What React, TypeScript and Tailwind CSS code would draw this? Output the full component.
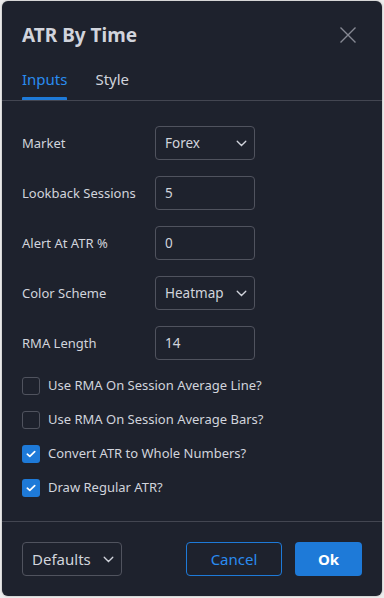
import React, { useState } from 'react';

const font = { fontFamily: '"Noto Sans", "Open Sans", Arial, sans-serif' };

function Chevron() {
  return (
    <svg width="11" height="7" viewBox="0 0 11 7" fill="none" className="shrink-0">
      <path d="M1.2 1.2L5.5 5.5L9.8 1.2" stroke="#d1d4dc" strokeWidth="1.3" strokeLinecap="round" />
    </svg>
  );
}

function SelectBox({ value }: { value: string }) {
  return (
    <div className="flex h-[34px] w-[100px] items-center justify-between rounded-[4px] border border-[#50535e] pl-[9px] pr-[7px] pt-[1px] text-[13.5px] text-[#d1d4dc]">
      <span>{value}</span>
      <Chevron />
    </div>
  );
}

function InputBox({ value }: { value: string }) {
  return (
    <div className="flex h-[34px] w-[100px] items-center rounded-[4px] border border-[#50535e] px-[9px] pt-[1px] text-[13.5px] text-[#d1d4dc]">
      {value}
    </div>
  );
}

function Check({ label, checked }: { label: string; checked: boolean }) {
  return (
    <div className="flex h-[34px] items-center gap-[8px]">
      {checked ? (
        <div className="flex h-[18px] w-[18px] items-center justify-center rounded-[3px] bg-[#1e7ad8]">
          <svg width="10" height="8" viewBox="0 0 10 8" fill="none">
            <path d="M1.3 4.2L3.8 6.4L8.7 1.6" stroke="#ffffff" strokeWidth="1.7" strokeLinecap="round" strokeLinejoin="round" />
          </svg>
        </div>
      ) : (
        <div className="h-[18px] w-[18px] rounded-[3px] border border-[#50535e]" />
      )}
      <span className="text-[13px] text-[#d1d4dc]">{label}</span>
    </div>
  );
}

export default function App() {
  const [tab, setTab] = useState('inputs');

  const fields: { label: string; kind: 'select' | 'input'; value: string }[] = [
    { label: 'Market', kind: 'select', value: 'Forex' },
    { label: 'Lookback Sessions', kind: 'input', value: '5' },
    { label: 'Alert At ATR %', kind: 'input', value: '0' },
    { label: 'Color Scheme', kind: 'select', value: 'Heatmap' },
    { label: 'RMA Length', kind: 'input', value: '14' },
  ];

  return (
    <div className="h-[598px] w-[384px] bg-[#ececec] pl-[2px] pt-[1px]" style={font}>
      <div className="flex h-[595px] w-[380px] flex-col rounded-[6px] bg-[#1e222d] shadow-[0_0_2px_rgba(0,0,0,0.35)]">
        {/* header */}
        <div className="border-b border-[#434651] px-[20px]">
          <div className="mt-[20px] flex h-[28px] items-center justify-between">
            <span className="text-[19px] font-bold text-[#d1d4dc]">ATR By Time</span>
            <svg width="18" height="18" viewBox="0 0 18 18" fill="none" className="mr-[5px]">
              <path d="M1.5 1.5L16.5 16.5M16.5 1.5L1.5 16.5" stroke="#868993" strokeWidth="1.4" />
            </svg>
          </div>
          <div className="mt-[14px] flex gap-[28px]">
            <button
              onClick={() => setTab('inputs')}
              className={`flex h-[37px] flex-col justify-between pt-[5px] text-[15px] ${tab === 'inputs' ? 'text-[#2a8cf0]' : 'text-[#d1d4dc]'}`}
            >
              <span>Inputs</span>
              <span className={`h-[3px] w-full rounded-t-[1px] ${tab === 'inputs' ? 'bg-[#1e7ad8]' : 'bg-transparent'}`} />
            </button>
            <button
              onClick={() => setTab('style')}
              className={`flex h-[37px] flex-col justify-between pt-[5px] text-[15px] ${tab === 'style' ? 'text-[#2a8cf0]' : 'text-[#d1d4dc]'}`}
            >
              <span>Style</span>
              <span className={`h-[3px] w-full ${tab === 'style' ? 'bg-[#1e7ad8]' : 'bg-transparent'}`} />
            </button>
          </div>
        </div>

        {/* body */}
        <div className="flex flex-1 flex-col px-[20px] pt-[25px]">
          <div className="flex flex-col gap-[16px]">
            {fields.map((f) => (
              <div key={f.label} className="flex items-center">
                <span className="w-[133px] pt-[2px] text-[13px] text-[#d1d4dc]">{f.label}</span>
                {f.kind === 'select' ? <SelectBox value={f.value} /> : <InputBox value={f.value} />}
              </div>
            ))}
          </div>
          <div className="mt-[9px] flex flex-col">
            <Check label="Use RMA On Session Average Line?" checked={false} />
            <Check label="Use RMA On Session Average Bars?" checked={false} />
            <Check label="Convert ATR to Whole Numbers?" checked={true} />
            <Check label="Draw Regular ATR?" checked={true} />
          </div>
        </div>

        {/* footer */}
        <div className="flex h-[75px] items-start justify-between border-t border-[#434651] px-[20px] pt-[20px]">
          <div className="flex h-[34px] w-[100px] items-center justify-between rounded-[4px] border border-[#50535e] pl-[9px] pr-[7px] text-[15px] text-[#d1d4dc]">
            <span>Defaults</span>
            <Chevron />
          </div>
          <div className="flex gap-[13px]">
            <button className="flex h-[34px] w-[96px] items-center justify-center rounded-[4px] border border-[#1e7ad8] text-[15px] text-[#2a8cf0]">
              Cancel
            </button>
            <button className="flex h-[34px] w-[67px] items-center justify-center rounded-[4px] bg-[#1e7ad8] text-[15px] font-bold text-white">
              Ok
            </button>
          </div>
        </div>
      </div>
    </div>
  );
}
